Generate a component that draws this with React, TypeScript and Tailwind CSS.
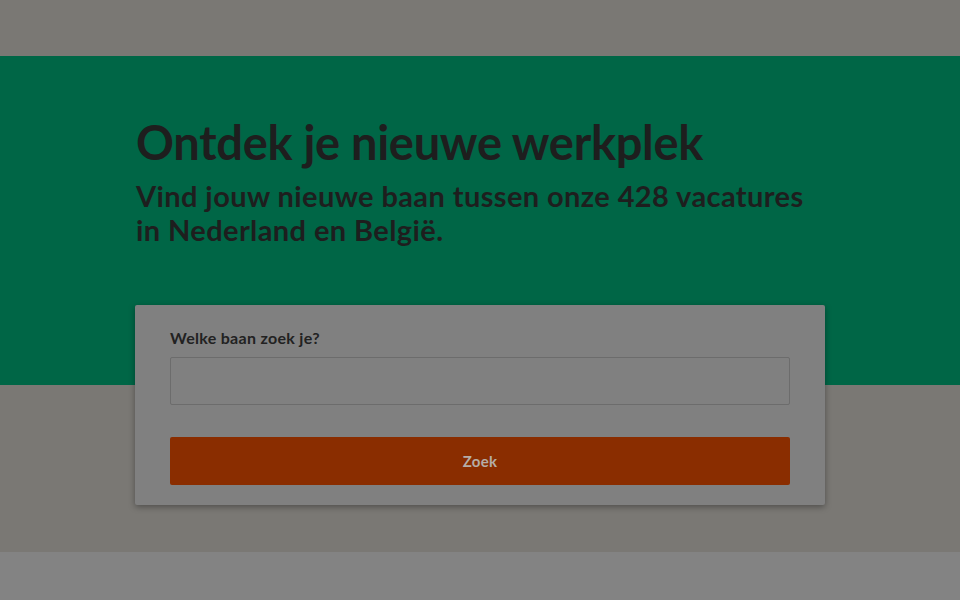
import React from "react";

export default function App() {
  return (
    <div className="w-[960px] h-[600px] overflow-hidden bg-[#7a7874] flex flex-col" style={{ fontFamily: "Lato, 'Noto Sans', sans-serif" }}>
      <div className="h-[56px] bg-[#7a7874] shrink-0" />
      <div className="relative bg-[#006646] h-[329px] shrink-0">
        <div className="pl-[136px] pt-[60px]">
          <h1 className="text-[47px] leading-[52px] font-bold text-[#1e1e1e] tracking-[-0.3px]">Ontdek je nieuwe werkplek</h1>
          <p className="mt-[11px] text-[29px] leading-[34px] font-bold text-[#1e1e1e] w-[690px] tracking-[0.4px]">
            Vind jouw nieuwe baan tussen onze 428 vacatures in Nederland en België.
          </p>
        </div>
      </div>
      <div className="relative h-[167px] bg-[#7a7874] shrink-0">
        <div className="absolute left-[135px] top-[-80px] w-[690px] h-[200px] bg-[#808080] rounded-[2px] shadow-[0_2px_6px_rgba(0,0,0,0.35)] px-[35px] pt-[23px]">
          <div className="text-[16px] leading-[20px] font-bold text-[#222222] tracking-[0.3px]">Welke baan zoek je?</div>
          <div className="mt-[9px] h-[48px] border border-[#6c6c6c] rounded-[2px] bg-[#808080]" />
          <button className="mt-[32px] w-full h-[48px] bg-[#8a2d00] rounded-[2px] text-[15px] font-bold text-[#b5ada7] tracking-[0.3px] flex items-center justify-center">
            Zoek
          </button>
        </div>
      </div>
      <div className="flex-1 bg-[#838383]" />
    </div>
  );
}
